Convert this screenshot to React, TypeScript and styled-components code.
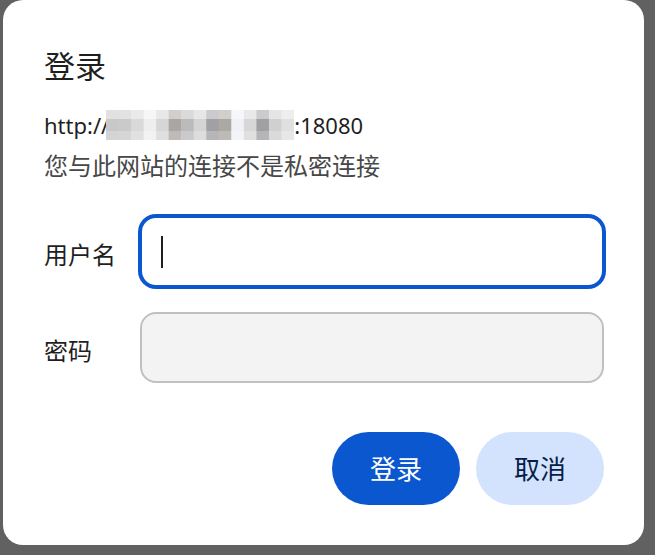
import styled, { createGlobalStyle } from "styled-components";

const GlobalStyle = createGlobalStyle`
    html, body {
        margin: 0;
        padding: 0;
        background: #616161;
    }
    body {
        font-family: "Noto Sans", "Noto Sans CJK SC", sans-serif;
        color: #1f1f1f;
    }
`;

const Page = styled.div`
    width: 655px;
    height: 555px;
    overflow: hidden;
    padding-left: 3px;
    box-sizing: border-box;
`;

const Dialog = styled.div`
    width: 641px;
    height: 545px;
    background: #ffffff;
    border-radius: 20px;
    box-sizing: border-box;
    padding: 46px 40px 40px 41px;
    display: flex;
    flex-direction: column;
`;

const Title = styled.h1`
    margin: 0;
    font-size: 31px;
    line-height: 40px;
    font-weight: 400;
    color: #1f1f1f;
`;

const Origin = styled.div`
    margin-top: 23px;
    height: 32px;
    display: flex;
    align-items: center;
    font-size: 22px;
    color: #1f1f1f;
    white-space: nowrap;
`;

const Mosaic = styled.svg`
    display: block;
    margin-left: -3px;
    flex: none;
`;

const Notice = styled.p`
    margin: 9px 0 0;
    font-size: 24px;
    line-height: 32px;
    color: #474747;
`;

const Form = styled.div`
    margin-top: 34px;
    display: flex;
    flex-direction: column;
    gap: 25px;
`;

const Row = styled.div`
    display: grid;
    grid-template-columns: 96px 1fr;
    align-items: center;
`;

const Label = styled.span`
    font-size: 24px;
    line-height: 32px;
    padding-top: 6px;
    color: #1f1f1f;
`;

const Field = styled.div<{ $focused?: boolean }>`
    height: 71px;
    box-sizing: border-box;
    border-radius: 16px;
    border: 2px solid ${(p) => (p.$focused ? "#0b57d0" : "#c0c0c0")};
    box-shadow: ${(p) => (p.$focused ? "0 0 0 2px #0b57d0" : "none")};
    background: ${(p) => (p.$focused ? "#ffffff" : "#f3f3f3")};
    display: flex;
    align-items: center;
    padding-left: 19px;
`;

const Caret = styled.span`
    width: 2px;
    height: 32px;
    background: #1f1f1f;
`;

const Actions = styled.div`
    margin-top: 49px;
    display: flex;
    justify-content: flex-end;
    gap: 16px;
`;

const Button = styled.button<{ $primary?: boolean }>`
    width: 128px;
    height: 73px;
    border: none;
    border-radius: 37px;
    font-family: inherit;
    font-size: 26px;
    line-height: 1;
    padding: 0;
    background: ${(p) => (p.$primary ? "#0b57d0" : "#d3e3fd")};
    color: ${(p) => (p.$primary ? "#ffffff" : "#041e49")};
    cursor: pointer;
`;

// pixelated (blurred) host name
const mid = [
    "c8c8c8", "cacaca", "d9d9d9", "eeeeee", "d6d6d6", "aaa7a3", "bbbbbd", "d4d4d4",
    "a1a1a5", "aca8a3", "eef1f5", "d7d7d7", "a0a0a4", "d0d0d0", "e0e0e0",
];

function lighten(hex: string, amount: number) {
    const n = parseInt(hex, 16);
    const ch = [(n >> 16) & 255, (n >> 8) & 255, n & 255].map((c) =>
        Math.round(c + (255 - c) * amount)
    );
    return `rgb(${ch.join(",")})`;
}

function HostMosaic() {
    const w = 188;
    const cell = w / mid.length;
    const rows = [
        { y: 0, h: 9, k: 0.45 },
        { y: 9, h: 12, k: 0 },
        { y: 21, h: 9, k: 0.22 },
    ];
    return (
        <Mosaic width={w} height={30} viewBox={`0 0 ${w} 30`}>
            {rows.map((r) =>
                mid.map((c, i) => (
                    <rect
                        key={`${r.y}-${i}`}
                        x={i * cell}
                        y={r.y}
                        width={cell + 0.5}
                        height={r.h}
                        fill={lighten(c, r.k)}
                    />
                ))
            )}
        </Mosaic>
    );
}

export default function App() {
    return (
        <Page>
            <GlobalStyle />
            <Dialog>
                <Title>登录</Title>
                <Origin>
                    <span>http://</span>
                    <HostMosaic />
                    <span>:18080</span>
                </Origin>
                <Notice>您与此网站的连接不是私密连接</Notice>
                <Form>
                    <Row>
                        <Label>用户名</Label>
                        <Field $focused>
                            <Caret />
                        </Field>
                    </Row>
                    <Row>
                        <Label>密码</Label>
                        <Field />
                    </Row>
                </Form>
                <Actions>
                    <Button $primary>登录</Button>
                    <Button>取消</Button>
                </Actions>
            </Dialog>
        </Page>
    );
}
